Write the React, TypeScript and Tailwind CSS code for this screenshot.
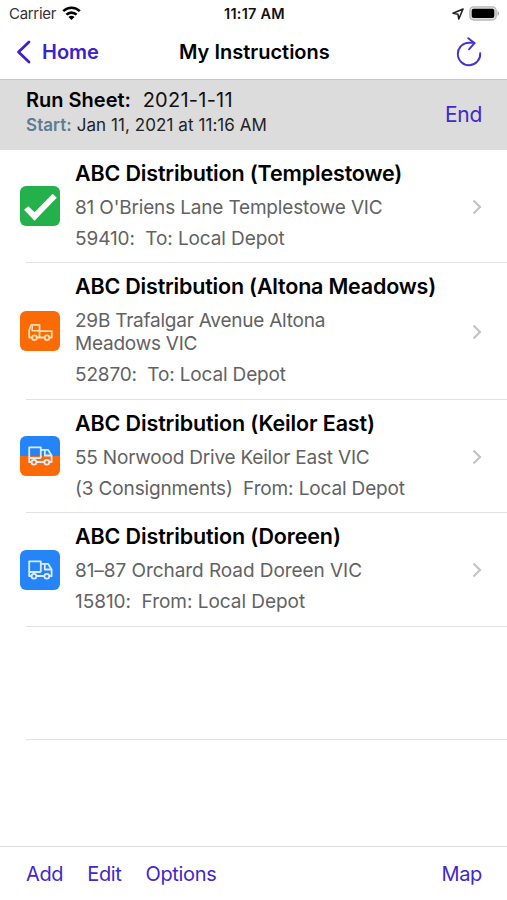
import type { ReactNode } from 'react'

type Status = 'done' | 'pickup' | 'mixed' | 'delivery'

interface Instruction {
    title: string
    titleClass: string
    address: ReactNode
    addressClass: string
    detail: string
    detailClass: string
    status: Status
    rowClass: string
}

const instructions: Instruction[] = [
    {
        title: 'ABC Distribution (Templestowe)',
        titleClass: 'tracking-[-0.16px]',
        address: "81 O'Briens Lane Templestowe VIC",
        addressClass: 'tracking-[-0.17px]',
        detail: '59410:  To: Local Depot',
        detailClass: 'tracking-[-0.1px]',
        status: 'done',
        rowClass: 'h-[113px]',
    },
    {
        title: 'ABC Distribution (Altona Meadows)',
        titleClass: 'tracking-[-0.2px]',
        address: (
            <>
                29B Trafalgar Avenue Altona
                <br />
                Meadows VIC
            </>
        ),
        addressClass: 'tracking-[-0.23px]',
        detail: '52870:  To: Local Depot',
        detailClass: 'tracking-[-0.15px]',
        status: 'pickup',
        rowClass: 'h-[137px]',
    },
    {
        title: 'ABC Distribution (Keilor East)',
        titleClass: 'tracking-[-0.13px]',
        address: '55 Norwood Drive Keilor East VIC',
        addressClass: 'tracking-[-0.2px]',
        detail: '(3 Consignments)  From: Local Depot',
        detailClass: 'tracking-[-0.14px]',
        status: 'mixed',
        rowClass: 'h-[113px]',
    },
    {
        title: 'ABC Distribution (Doreen)',
        titleClass: 'tracking-[-0.13px]',
        address: '81–87 Orchard Road Doreen VIC',
        addressClass: 'tracking-[-0.06px]',
        detail: '15810:  From: Local Depot',
        detailClass: 'tracking-[-0.04px]',
        status: 'delivery',
        rowClass: 'h-[114px]',
    },
]

const badgeColors: Record<Status, string> = {
    done: 'bg-[#24b04b]',
    pickup: 'bg-[#fb6a05]',
    mixed: 'bg-linear-to-b from-[#2584f8] from-50% to-[#fb6a05] to-50%',
    delivery: 'bg-[#2584f8]',
}

function StatusBadge({ status }: { status: Status }) {
    return (
        <div className={`size-10 shrink-0 overflow-hidden rounded-[6px] ${badgeColors[status]}`}>
            <svg viewBox="0 0 40 40" className="size-10" fill="none" strokeLinejoin="round">
                {status === 'done' && (
                    <path d="M4 23.8 8.3 20.2 14.6 26.2 32.7 7.7 36.8 11.8 14.5 34.8Z" fill="#fff" />
                )}
                {status === 'pickup' && (
                    <g stroke="#ffe0b0" strokeWidth="1.8">
                        <path d="M12 26.5H9.2V19l2-5.2h8.3V26.5M19.5 20.2h12.3v6.3h-2.3M17 26.5h7.5" />
                        <path d="M12.2 15v4.8h7" strokeWidth="1.5" />
                        <circle cx="14.5" cy="26.7" r="2.3" />
                        <circle cx="27" cy="26.7" r="2.3" />
                    </g>
                )}
                {(status === 'mixed' || status === 'delivery') && (
                    <g stroke="#dcecff" strokeWidth="1.8">
                        <path d="M11.5 26H9.2V11.3h11.6V22M9.2 22h11.6M16.5 26h8M20.8 13.8h7.2l3.6 5.7V26h-2.3M24.8 14v5.5h6.5" />
                        <circle cx="14" cy="26.2" r="2.4" />
                        <circle cx="26.8" cy="26.2" r="2.4" />
                    </g>
                )}
            </svg>
        </div>
    )
}

function InstructionRow({ item }: { item: Instruction }) {
    return (
        <li className={`flex pl-5 ${item.rowClass}`}>
            <div className="flex items-center pb-px">
                <StatusBadge status={item.status} />
            </div>
            <div className="ml-[15px] flex-1 pt-[10px] whitespace-pre">
                <h2 className={`text-[21.5px] leading-[26px] font-semibold text-black ${item.titleClass}`}>
                    {item.title}
                </h2>
                <p className={`mt-[10px] text-[19px] leading-[23px] text-[#626262] ${item.addressClass}`}>
                    {item.address}
                </p>
                <p className={`mt-2 text-[19px] leading-[23px] text-[#626262] ${item.detailClass}`}>
                    {item.detail}
                </p>
            </div>
            <div className="flex items-center pr-[25px]">
                <svg width="10" height="16" viewBox="0 0 10 16" fill="none" stroke="#c4c4c6" strokeWidth="2.2">
                    <path d="M1.5 1.5 8 8 1.5 14.5" />
                </svg>
            </div>
        </li>
    )
}

function StatusBar() {
    return (
        <div className="flex h-7 items-center justify-between pr-[7px] pl-[9px] text-[15px]">
            <div className="flex flex-1 items-center gap-[6px]">
                <span className="tracking-[-0.3px] text-[#333]">Carrier</span>
                <svg width="19" height="14" viewBox="0 0 19 14" className="-mt-[2px]" fill="none" stroke="#000" strokeWidth="2.6">
                    <path d="M1.2 5.2a11.8 11.8 0 0 1 16.6 0" />
                    <path d="M4.4 8.7a7.2 7.2 0 0 1 10.2 0" />
                    <path d="M9.5 14 6.5 11a4.2 4.2 0 0 1 6 0Z" fill="#000" stroke="none" />
                </svg>
            </div>
            <span className="text-[14.5px] font-semibold tracking-[0.25px] text-[#111]">11:17 AM</span>
            <div className="flex flex-1 items-center justify-end gap-[5px]">
                <svg width="12" height="12" viewBox="0 0 12 12" fill="none" stroke="#222" strokeWidth="1.6" strokeLinejoin="round">
                    <path d="M11 1 1 5.2l4.9 1 .9 4.8Z" />
                </svg>
                <svg width="31" height="15" viewBox="0 0 31 15" className="-mt-[2px]">
                    <rect x="0.8" y="0.8" width="26.4" height="13.2" rx="3.8" fill="#dedede" stroke="#b9b9b9" strokeWidth="1.3" />
                    <rect x="2.7" y="2.7" width="22.6" height="9.4" rx="2" fill="#000" />
                    <path d="M28.5 5v5a2.7 2.7 0 0 0 0-5Z" fill="#b0b0b0" />
                </svg>
            </div>
        </div>
    )
}

function NavBar() {
    return (
        <nav className="flex h-[51px] items-center pr-[25px] pb-[3px] pl-4 text-[20px]">
            <a className="flex w-[163px] items-center gap-[11px] font-semibold text-[#3b22cc]">
                <svg width="15" height="24" viewBox="0 0 15 24" fill="none" stroke="#3b22cc" strokeWidth="2.8" strokeLinecap="round" strokeLinejoin="round">
                    <path d="M13 2 2.5 12 13 22" />
                </svg>
                Home
            </a>
            <h1 className="font-semibold text-black">My Instructions</h1>
            <div className="flex flex-1 justify-end">
                <svg width="26" height="30" viewBox="0 0 26 30" fill="none" stroke="#4530d0" strokeWidth="1.9" strokeLinecap="round">
                    <path d="M18 5.8 13 5.8A11.2 11.2 0 1 0 24.2 16.2" />
                    <path d="M12.3 1.2 18.5 6.2 13 12.3" />
                </svg>
            </div>
        </nav>
    )
}

export default function App() {
    return (
        <div className="flex h-[900px] w-[507px] flex-col overflow-hidden bg-white font-[Inter,sans-serif]">
            <StatusBar />
            <NavBar />
            <section className="flex h-[71px] items-center justify-between border-t border-[#c9c9c9] bg-[#dcdcdc] pr-[25px] pl-[26px]">
                <div className="-mt-[6px] whitespace-pre">
                    <p className="text-[20px] leading-[26px] text-[#111]">
                        <span className="font-semibold text-black">Run Sheet:</span>
                        <span className="tracking-[0.25px]">{'  '}2021-1-11</span>
                    </p>
                    <p className="text-[17px] leading-[25px] tracking-[0.07px] text-[#222]">
                        <span className="font-semibold text-[#5b7d92]">Start:</span> Jan 11, 2021 at 11:16 AM
                    </p>
                </div>
                <a className="text-[21px] tracking-[-0.3px] text-[#3f28cc]">End</a>
            </section>
            <ul className="flex-1">
                {instructions.map((item) => (
                    <div key={item.title}>
                        <InstructionRow item={item} />
                        <div className="-mt-px ml-[26px] h-px bg-[#e2e2e4]" />
                    </div>
                ))}
                <div className="ml-[26px] h-[113px] border-b border-[#e2e2e4]" />
            </ul>
            <footer className="flex h-[54px] items-center gap-6 border-t border-[#dedede] pr-[25px] pl-[26px] text-[20px] tracking-[-0.35px] text-[#3f28cc]">
                <a>Add</a>
                <a>Edit</a>
                <a>Options</a>
                <a className="ml-auto">Map</a>
            </footer>
        </div>
    )
}
